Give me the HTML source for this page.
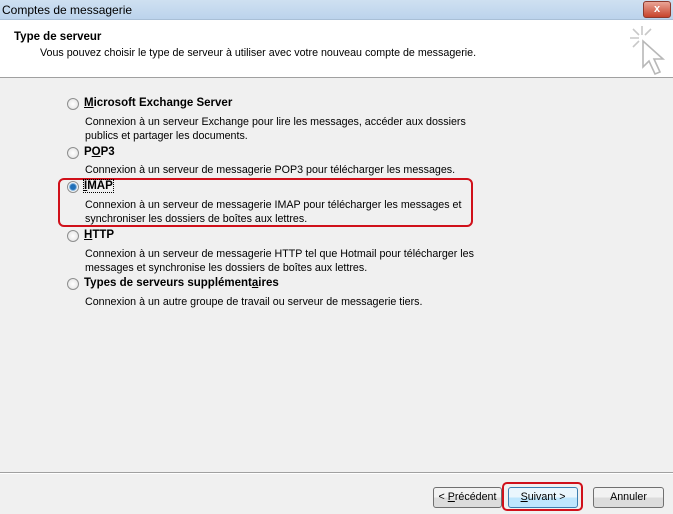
<!DOCTYPE html>
<html><head><meta charset="utf-8"><style>
*{margin:0;padding:0;box-sizing:border-box}
body{width:673px;height:514px;overflow:hidden;background:#f0f0f0;font-family:"Liberation Sans",sans-serif;font-size:10.7px;color:#000;position:relative}
.a{position:absolute;white-space:nowrap}
.title{left:0;top:0;width:673px;height:20px;background:linear-gradient(#cfe0f1,#bcd3ec);border-bottom:1px solid #a9bfd6}
.hdr{left:0;top:20px;width:673px;height:58px;background:#fff;border-bottom:1px solid #a0a0a0}
.radio{width:12px;height:12px;border-radius:50%;border:1px solid #8e8f8f;background:radial-gradient(#fff,#e0e0e0)}
.b{font-weight:bold;font-size:11.5px}
.btn{height:21px;border:1px solid #707070;border-radius:3px;background:linear-gradient(#f2f2f2 50%,#dcdcdc 50%);text-align:center;line-height:19px}
u{text-decoration:underline}
</style></head><body>
<div class="a title"></div>
<div class="a" style="left:2px;top:3px;font-size:12px">Comptes de messagerie</div>
<div class="a" style="left:643px;top:1px;width:28px;height:17px;border-radius:3px;background:linear-gradient(#e9a597,#c7432b);border:1px solid #8b3a2e;color:#fff;font-weight:bold;text-align:center;line-height:15px;font-size:11px">x</div>
<div class="a hdr"></div>
<div class="a b" style="left:14px;top:31px;font-size:11.5px">Type de serveur</div>
<div class="a" style="left:40px;top:47px">Vous pouvez choisir le type de serveur à utiliser avec votre nouveau compte de messagerie.</div>
<svg class="a" style="left:626px;top:24px" width="44" height="52" viewBox="0 0 44 52"><g stroke="#c8c8c8" stroke-width="1.6" fill="none"><path d="M16 2v9M4 14h9M7 5l6 6M25 5l-6 6M7 23l6-6"/><path d="M17 17l0 26 6-6 6 13 5-2-6-13 9 0z" fill="#fff" stroke="#b8b8b8"/></g></svg>
<div class="a radio" style="left:67px;top:98px"></div>
<div class="a b" style="left:84px;top:97px"><u>M</u>icrosoft Exchange Server</div>
<div class="a" style="left:85px;top:116px;line-height:13.5px">Connexion à un serveur Exchange pour lire les messages, accéder aux dossiers<br>publics et partager les documents.</div>
<div class="a radio" style="left:67px;top:147px"></div>
<div class="a b" style="left:84px;top:146px">P<u>O</u>P3</div>
<div class="a" style="left:85px;top:164px">Connexion à un serveur de messagerie POP3 pour télécharger les messages.</div>
<div class="a" style="left:58px;top:178px;width:415px;height:49px;border:2px solid #d0101a;border-radius:6px"></div>
<div class="a radio" style="left:67px;top:181px;background:radial-gradient(#1f6fb8 0 2.5px,#8ab8e0 3.5px,#fff 4.5px)"></div>
<div class="a b" style="left:84px;top:180px;outline:1px dotted #000"><u>I</u>MAP</div>
<div class="a" style="left:85px;top:199px;line-height:13.5px">Connexion à un serveur de messagerie IMAP pour télécharger les messages et<br>synchroniser les dossiers de boîtes aux lettres.</div>
<div class="a radio" style="left:67px;top:230px"></div>
<div class="a b" style="left:84px;top:229px"><u>H</u>TTP</div>
<div class="a" style="left:85px;top:248px;line-height:13.5px">Connexion à un serveur de messagerie HTTP tel que Hotmail pour télécharger les<br>messages et synchronise les dossiers de boîtes aux lettres.</div>
<div class="a radio" style="left:67px;top:278px"></div>
<div class="a b" style="left:84px;top:277px">Types de serveurs supplément<u>a</u>ires</div>
<div class="a" style="left:85px;top:296px">Connexion à un autre groupe de travail ou serveur de messagerie tiers.</div>
<div class="a" style="left:0;top:472px;width:673px;border-top:1px solid #a0a0a0;border-bottom:1px solid #fff"></div>
<div class="a btn" style="left:433px;top:487px;width:69px">&lt; <u>P</u>récédent</div>
<div class="a" style="left:502px;top:482px;width:81px;height:29px;border:2px solid #d0101a;border-radius:5px"></div>
<div class="a btn" style="left:508px;top:487px;width:70px;border-color:#3c7fb1;background:linear-gradient(#eaf6fd 50%,#bee6fd 50%)"><u>S</u>uivant &gt;</div>
<div class="a btn" style="left:593px;top:487px;width:71px">Annuler</div>
</body></html>
